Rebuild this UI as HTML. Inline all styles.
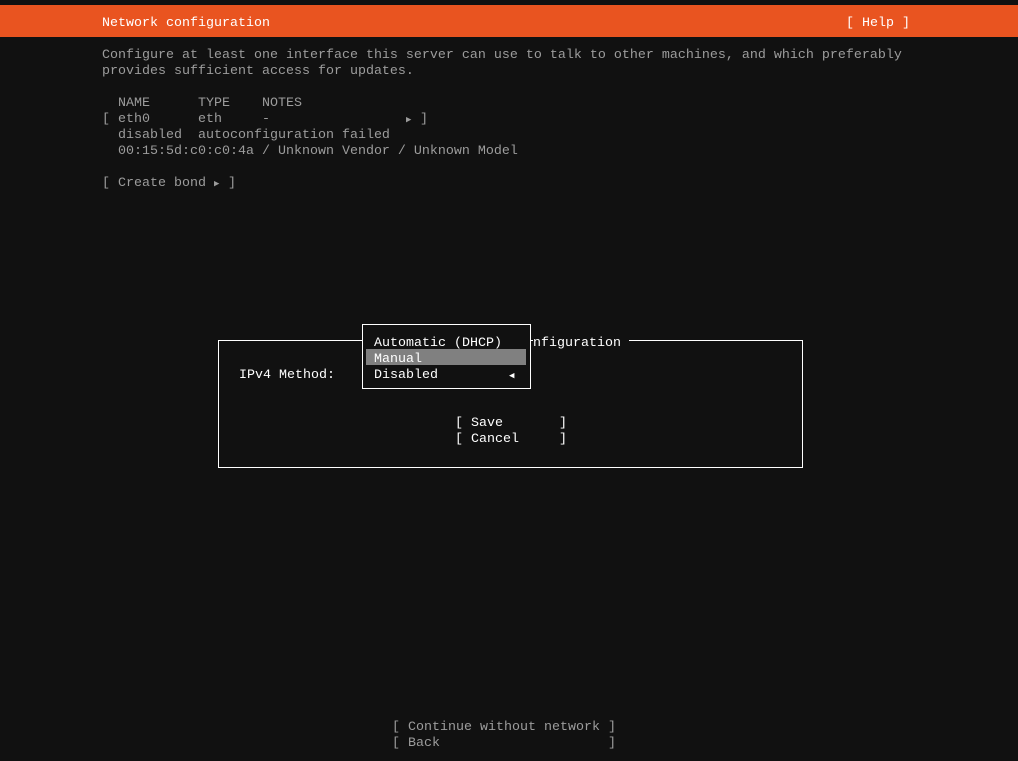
<!DOCTYPE html>
<html><head><style>
html,body{margin:0;padding:0;background:#111;width:1018px;height:761px;overflow:hidden}
.l{position:absolute;white-space:pre;font-family:"Liberation Mono",monospace;font-size:13.33px;line-height:16px;height:16px;color:#9c9c9c;margin-top:2px}
.w{color:#fff}
#bar{position:absolute;left:0;top:5px;width:1018px;height:32px;background:#e95420}
.box{position:absolute;border:1px solid #fff;box-sizing:border-box;background:#111}
.a{font-size:9px;vertical-align:1px}
</style></head><body>
<div id="bar"></div>
<div class="l w" style="left:102px;top:14px">Network configuration</div>
<div class="l w" style="left:846px;top:14px">[ Help ]</div>
<div class="l" style="left:102px;top:46px">Configure at least one interface this server can use to talk to other machines, and which preferably</div>
<div class="l" style="left:102px;top:62px">provides sufficient access for updates.</div>
<div class="l" style="left:102px;top:94px">  NAME      TYPE    NOTES</div>
<div class="l" style="left:102px;top:110px">[ eth0      eth     -</div>
<div class="l" style="left:406px;top:110px"><span class="a">▶</span></div>
<div class="l" style="left:420px;top:110px">]</div>
<div class="l" style="left:102px;top:126px">  disabled  autoconfiguration failed</div>
<div class="l" style="left:102px;top:142px">  00:15:5d:c0:c0:4a / Unknown Vendor / Unknown Model</div>
<div class="l" style="left:102px;top:174px">[ Create bond</div>
<div class="l" style="left:214px;top:174px"><span class="a">▶</span></div>
<div class="l" style="left:228px;top:174px">]</div>

<div class="box" style="left:218px;top:340px;width:585px;height:128px"></div>
<div class="l w" style="left:533px;top:334px;background:#111">nfiguration </div>
<div class="l w" style="left:239px;top:366px">IPv4 Method:</div>
<div class="l w" style="left:455px;top:414px">[ Save       ]</div>
<div class="l w" style="left:455px;top:430px">[ Cancel     ]</div>

<div class="box" style="left:362px;top:324px;width:169px;height:65px"></div>
<div style="position:absolute;left:366px;top:349px;width:160px;height:16px;background:#808080"></div>
<div class="l w" style="left:374px;top:334px">Automatic (DHCP)</div>
<div class="l w" style="left:374px;top:350px">Manual</div>
<div class="l w" style="left:374px;top:366px">Disabled</div>
<div class="l w" style="left:509px;top:366px"><span class="a">◀</span></div>

<div class="l" style="left:392px;top:718px">[ Continue without network ]</div>
<div class="l" style="left:392px;top:734px">[ Back                     ]</div>
</body></html>
